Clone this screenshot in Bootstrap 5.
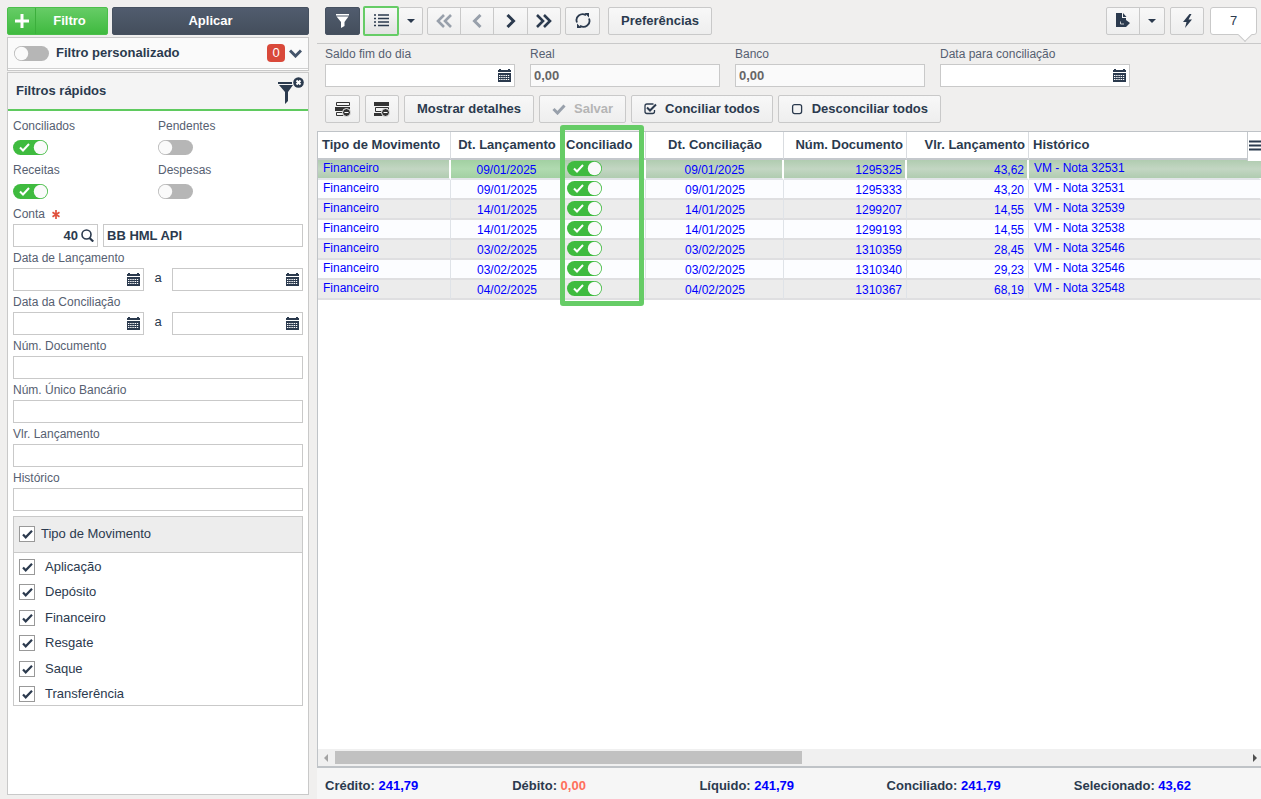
<!DOCTYPE html>
<html lang="pt-BR">
<head>
<meta charset="utf-8">
<meta name="viewport" content="width=device-width, initial-scale=1">
<title>Conciliação Bancária</title>
<link href="https://cdn.jsdelivr.net/npm/bootstrap@5.3.0/dist/css/bootstrap.min.css" rel="stylesheet">
<style>
body{background:#f0efee;color:#2b3a4e;font-family:"Liberation Sans",Arial,sans-serif;font-size:13px;line-height:20px}
svg{display:block}
.side{width:317px;padding:7px 8px 4px 7px}
.tbtn{--bs-btn-font-size:13px;--bs-btn-line-height:20px;--bs-btn-padding-x:12px;--bs-btn-padding-y:3px;--bs-btn-border-radius:2px;--bs-btn-font-weight:700;--bs-btn-color:#2b3a4e;--bs-btn-border-color:#c9c9c9;--bs-btn-hover-color:#2b3a4e;--bs-btn-hover-border-color:#aaa;--bs-btn-disabled-color:#b5b5b5;--bs-btn-disabled-border-color:#c9c9c9;--bs-btn-disabled-opacity:1;background:linear-gradient(#f8f8f8,#eee);height:28px;display:inline-flex;align-items:center;justify-content:center;white-space:nowrap}
.ico{width:35px;padding-left:0;padding-right:0}
.ico-n{width:34px;padding-left:0;padding-right:0}
.ico-c{width:26px;padding-left:0;padding-right:0}
.ico-m{width:24px;padding-left:0;padding-right:0}
.bt-green{background:linear-gradient(#66cc66,#3fba3f);color:#fff!important;border-color:#4bbf4b;width:101px;padding:0}
.bt-green .plus{width:28px;height:26px;border-right:1px solid #3caf3c}
.bt-dark{background:linear-gradient(#515c6e,#444e5c);color:#fff!important;border-color:#465160}
.picked{border:2px solid #66cc66;height:30px;width:36px;background:linear-gradient(#f8f8f8,#e2e2e2)}
.box{border:1px solid #c9c9c9}
.custom{height:34px;margin-top:2px;background:#fafafa;padding:0 6px 2px;box-shadow:inset 0 -1px #fff,inset 0 -2px #d0d0d0}
.custom label{padding-left:7px}
.count{background:#d9493a;color:#fff;font-weight:400;width:18px;height:18px;border-radius:4px;line-height:18px;text-align:center}
.panel{margin-top:1px}
.panel-head{height:38px;background:#f4f4f4;border-bottom:2px solid #5fca5f;padding:0 4px 0 8px}
.panel-body{padding:5px 5px 0}
.frow{height:44px}
.lbl{display:block;font-size:12px;line-height:20px;color:#566071}
.fld{display:flex;align-items:center;height:23px;border:1px solid #c9c9c9;background:#fff}
.fld input{border:0;outline:0;background:none;flex:1 1 0;min-width:0;padding:0 3px;font-weight:700;color:#2b3a4e;height:21px}
.fld button{border:0;background:none;padding:0 3px;color:#2b3a4e}
.fld.ro{background:#fafafa}.fld.ro input{color:#666}
.half{width:131px}
.acct{width:85px}
.sw{appearance:none;display:block;width:35px;height:15px;border-radius:8px;margin:0;flex:none;background:#b6b6b6 url("data:image/svg+xml,%3Csvg xmlns='http://www.w3.org/2000/svg' viewBox='0 0 35 15'%3E%3Ccircle cx='7.5' cy='7.5' r='6.7' fill='%23fafafa'/%3E%3C/svg%3E")}
.sw:checked{background:#3fbb3f url("data:image/svg+xml,%3Csvg xmlns='http://www.w3.org/2000/svg' viewBox='0 0 35 15'%3E%3Ccircle cx='27.5' cy='7.5' r='6.7' fill='%23fafafa'/%3E%3Cpath d='M7 7.5l3 3L16 4' fill='none' stroke='%23fff' stroke-width='2'/%3E%3C/svg%3E")}
.ck{appearance:none;display:block;width:16px;height:16px;margin:0;flex:none;border:1px solid #999;background:#fff}
.ck:checked{background:#fff url("data:image/svg+xml,%3Csvg xmlns='http://www.w3.org/2000/svg' viewBox='0 0 14 14'%3E%3Cpath d='M3 7.5l2.7 2.8L12 3.8' fill='none' stroke='%232b3a4e' stroke-width='2.2'/%3E%3C/svg%3E")}
.types-head{height:36px;background:#ededed;border-bottom:1px solid #c9c9c9;padding:0 5px 2px;gap:6px}
.types{height:152px;padding:4px 5px 1px}
.types .d-flex{gap:10px;height:20px}
.toolbar{height:44px;padding:0 4px 2px 8px;border-bottom:1px solid #c9c9c9}
.gap3{margin-right:3px}
.gap5{margin-right:5px}
.bubble{position:relative;width:47px;height:28px;margin-left:6px;background:#fff;border:1px solid #c9c9c9;border-radius:3px;line-height:26px;text-align:center}
.bubble::after{content:"";position:absolute;right:6px;bottom:-6px;width:10px;height:10px;background:#fff;border:solid #c9c9c9;border-width:0 1px 1px 0;transform:rotate(45deg)}
.heads{gap:15px;padding:0 8px}
.heads>div{flex:0 1 190px;min-width:0}
.acts{gap:5px;padding:8px}
.gridwrap{position:relative;background:#fff;border:1px solid #bfc3c7;border-right:0;border-bottom:2px solid #bfc3c7}
.gt{table-layout:fixed;width:100%;border-collapse:separate;border-spacing:0;margin:0}
.gt th{height:28px;padding:0 3px 0 4px;border-right:1px solid #d9dce0;border-bottom:2px solid #c4c8cc;white-space:nowrap;font-weight:700}
.gt th.tg{padding-left:3px}
.gt td{height:20px;padding:0 4px 1px 5px;line-height:17px;font-size:12px;color:#00f;white-space:nowrap;border-right:1px solid #dfe3e8;border-bottom:2px solid #dfdfe1;background:#fcfdff}
.gt tr:nth-child(odd) td{background:#ececec}
.gt td.lo{line-height:16px;padding-top:2px;padding-bottom:0}
.gt td.tg{padding:0 0 1px 4px}
.gt tbody tr.sel td{background:linear-gradient(#b0ccb0,#c3d6c3 50%,#b0ccb0);border-right:2px solid #fff;border-bottom:2px solid #e2e5e8}
.gt tbody tr.sel td.cur{background:linear-gradient(#a2d0a2,#b0dab0 50%,#a2d0a2)}
.gt tbody tr.sel td.text-end{padding-right:3px}
.gt tr>:last-child{border-right-color:transparent!important}
.mark-col{position:absolute;left:242px;top:-7px;width:84px;height:181px;border:5px solid #66cc66;border-radius:3px;pointer-events:none}
.colmenu{position:absolute;right:0;top:0;width:14px;height:29px;border:0;border-left:1px solid #c4c8cc;background:#fff;padding:0 0 3px 1px}
.hs{height:17px;background:#f0f0f0}
.thumb{width:calc(50% - 5px);height:13px;background:#c1c1c1}
.foot{height:31px;background:#f6f6f6;padding:6px 0 0 8px;font-weight:700;line-height:24px}
.blue{color:#00f}.coral{color:#ff6f5b}
</style>
</head>
<body>
<svg width="0" height="0" class="position-absolute" aria-hidden="true">
<symbol id="cal" viewBox="0 0 13 13"><path fill="#2b3a4e" d="M0 1h1V0h2v1h7V0h2v1h1v2H0zM0 4h13v9H0z"/><path stroke="#fff" d="M1 6.500h11M1 8.500h11M1 10.500h11" stroke-dasharray="1.400 .8"/></symbol>
<symbol id="mag" viewBox="0 0 13 13"><circle cx="5.500" cy="5.500" r="4.500" fill="none" stroke="#2b3a4e" stroke-width="1.600"/><path d="M8.500 9l3.800 3.500" stroke="#2b3a4e" stroke-width="2.200"/></symbol>
<symbol id="car" viewBox="0 0 8 4"><path fill="#2b3a4e" d="M0 0h8L4 4z"/></symbol>
</svg>
<div class="d-flex min-vh-100">
<aside class="side d-flex flex-column flex-shrink-0">
  <div class="d-flex gap-1">
    <button class="btn tbtn bt-green"><span class="plus d-flex align-items-center justify-content-center"><svg width="14" height="14"><path d="M7 0v14M0 7h14" stroke="#fff" stroke-width="3"/></svg></span><span class="flex-grow-1 pe-1">Filtro</span></button>
    <button class="btn tbtn bt-dark flex-grow-1">Aplicar</button>
  </div>
  <div class="box custom d-flex align-items-center fw-bold flex-shrink-0">
    <input type="checkbox" class="sw" id="fp"><label for="fp" class="me-auto">Filtro personalizado</label>
    <span class="count">0</span>
    <svg class="ms-1" width="13" height="9"><path d="M1 1.500l5.500 5.500 5.500-5.500" fill="none" stroke="#44546a" stroke-width="3"/></svg>
  </div>
  <section class="box panel bg-white flex-grow-1">
    <div class="panel-head d-flex align-items-center justify-content-between"><span class="fw-bold">Filtros rápidos</span>
      <svg width="27" height="32" viewBox="0 0 27 32"><path fill="#2b3a4e" d="M1 7h14v2H1zM2 10h14l-5 7v9l-3 3V17z"/><circle cx="21.500" cy="7.500" r="5.300" fill="#2b3a4e"/><path d="M19.500 5.500l4 4M23.500 5.500l-4 4" stroke="#fff" stroke-width="2"/></svg></div>
    <div class="panel-body">
      <div class="row g-0 frow"><div class="col-6"><label class="lbl" for="s1">Conciliados</label><input id="s1" type="checkbox" class="sw mt-1" checked></div><div class="col-6"><label class="lbl" for="s2">Pendentes</label><input id="s2" type="checkbox" class="sw mt-1"></div></div>
      <div class="row g-0 frow"><div class="col-6"><label class="lbl" for="s3">Receitas</label><input id="s3" type="checkbox" class="sw mt-1" checked></div><div class="col-6"><label class="lbl" for="s4">Despesas</label><input id="s4" type="checkbox" class="sw mt-1"></div></div>
      <div class="frow"><label class="lbl" for="ct">Conta&nbsp; <svg class="d-inline" width="8" height="9"><path d="M4 0v9M.5 2.200l7 4.600M7.500 2.200l-7 4.600" stroke="#e0503c" stroke-width="1.700"/></svg></label>
        <div class="d-flex"><div class="fld acct gap5"><input id="ct" class="text-end pe-0" value="40"><button aria-label="Pesquisar"><svg width="13" height="13"><use href="#mag"/></svg></button></div><div class="fld flex-grow-1"><input value="BB HML API" aria-label="Nome da conta"></div></div></div>
      <div class="frow"><label class="lbl" for="d1">Data de Lançamento</label><div class="d-flex justify-content-between"><div class="fld half"><input id="d1"><button aria-label="Calendário"><svg width="13" height="13"><use href="#cal"/></svg></button></div><span>a</span><div class="fld half"><input aria-label="até"><button aria-label="Calendário"><svg width="13" height="13"><use href="#cal"/></svg></button></div></div></div>
      <div class="frow"><label class="lbl" for="d2">Data da Conciliação</label><div class="d-flex justify-content-between"><div class="fld half"><input id="d2"><button aria-label="Calendário"><svg width="13" height="13"><use href="#cal"/></svg></button></div><span>a</span><div class="fld half"><input aria-label="até"><button aria-label="Calendário"><svg width="13" height="13"><use href="#cal"/></svg></button></div></div></div>
      <div class="frow"><label class="lbl" for="t1">Núm. Documento</label><div class="fld"><input id="t1"></div></div>
      <div class="frow"><label class="lbl" for="t2">Núm. Único Bancário</label><div class="fld"><input id="t2"></div></div>
      <div class="frow"><label class="lbl" for="t3">Vlr. Lançamento</label><div class="fld"><input id="t3"></div></div>
      <div class="frow"><label class="lbl" for="t4">Histórico</label><div class="fld"><input id="t4"></div></div>
      <div class="box mt-1">
        <div class="types-head d-flex align-items-center"><input type="checkbox" class="ck" id="k0" checked><label for="k0">Tipo de Movimento</label></div>
        <div class="types d-flex flex-column justify-content-between">
          <div class="d-flex align-items-center"><input type="checkbox" class="ck" id="k1" checked><label for="k1">Aplicação</label></div>
          <div class="d-flex align-items-center"><input type="checkbox" class="ck" id="k2" checked><label for="k2">Depósito</label></div>
          <div class="d-flex align-items-center"><input type="checkbox" class="ck" id="k3" checked><label for="k3">Financeiro</label></div>
          <div class="d-flex align-items-center"><input type="checkbox" class="ck" id="k4" checked><label for="k4">Resgate</label></div>
          <div class="d-flex align-items-center"><input type="checkbox" class="ck" id="k5" checked><label for="k5">Saque</label></div>
          <div class="d-flex align-items-center"><input type="checkbox" class="ck" id="k6" checked><label for="k6">Transferência</label></div>
        </div>
      </div>
    </div>
  </section>
</aside>
<main class="d-flex flex-column flex-grow-1" style="min-width:0">
  <div class="toolbar d-flex align-items-center">
    <button class="btn tbtn bt-dark ico gap3" aria-label="Filtrar"><svg width="13" height="14"><path fill="#fff" d="M0 0h13v1.500H0zM.5 2.500h12L8.500 8v4L5 14V8z"/></svg></button>
    <button class="btn tbtn picked px-0" aria-label="Lista"><svg width="15" height="13"><path d="M0 1h2M0 4.500h2M0 8h2M0 11.500h2M4 1h11M4 4.500h11M4 8h11M4 11.500h11" stroke="#2b3a4e" stroke-width="1.500"/></svg></button>
    <button class="btn tbtn ico-m border-start-0 me-1" aria-label="Modos"><svg width="8" height="4"><use href="#car"/></svg></button>
    <div class="btn-group">
      <button class="btn tbtn ico-n" aria-label="Primeiro"><svg width="16" height="14"><path d="M8 1L2 7l6 6M15 1L9 7l6 6" fill="none" stroke="#98a0ab" stroke-width="2.600"/></svg></button>
      <button class="btn tbtn ico-n" aria-label="Anterior"><svg width="10" height="14"><path d="M8.500 1l-6 6 6 6" fill="none" stroke="#98a0ab" stroke-width="3"/></svg></button>
      <button class="btn tbtn ico" aria-label="Próximo"><svg width="10" height="14"><path d="M1.500 1l6 6-6 6" fill="none" stroke="#2b3a4e" stroke-width="3"/></svg></button>
      <button class="btn tbtn ico-n" aria-label="Último"><svg width="16" height="14"><path d="M1 1l6 6-6 6M8 1l6 6-6 6" fill="none" stroke="#2b3a4e" stroke-width="2.600"/></svg></button>
    </div>
    <button class="btn tbtn ico ms-1" aria-label="Atualizar"><svg width="16" height="15" viewBox="0 0 16 15"><path d="M2 9.500A6 6 0 0 1 11 2.300M14 5.500A6 6 0 0 1 5 12.700" fill="none" stroke="#2b3a4e" stroke-width="1.800"/><path fill="#2b3a4e" d="M9.500 0H14v4.500zM6.500 15H2v-4.500z"/></svg></button>
    <button class="btn tbtn ms-2">Preferências</button>
    <div class="btn-group ms-auto gap5"><button class="btn tbtn ico-n" aria-label="Exportar"><svg width="14" height="15" viewBox="0 0 14 15"><path fill="#2b3a4e" d="M0 0h6v5h4v2l4 3-4 4H0zM7 0l3.500 4H7z"/><path stroke="#eee" d="M4.500 8.500v2.500H8" fill="none" stroke-width=".8"/></svg></button><button class="btn tbtn ico-c" aria-label="Opções"><svg width="8" height="4"><use href="#car"/></svg></button></div>
    <button class="btn tbtn ico-n" aria-label="Ações"><svg width="9" height="14"><path fill="#2b3a4e" d="M6.500 0L0 8h3.500L2 14l7-8.500H5.500L8.500 0z"/></svg></button>
    <div class="bubble">7</div>
  </div>
  <div class="heads d-flex">
    <div><label class="lbl" for="h1">Saldo fim do dia</label><div class="fld"><input id="h1"><button aria-label="Calendário"><svg width="13" height="13"><use href="#cal"/></svg></button></div></div>
    <div><label class="lbl" for="h2">Real</label><div class="fld ro"><input id="h2" value="0,00" readonly></div></div>
    <div><label class="lbl" for="h3">Banco</label><div class="fld ro"><input id="h3" value="0,00" readonly></div></div>
    <div><label class="lbl" for="h4">Data para conciliação</label><div class="fld"><input id="h4"><button aria-label="Calendário"><svg width="13" height="13"><use href="#cal"/></svg></button></div></div>
  </div>
  <div class="acts d-flex">
    <button class="btn tbtn ico" aria-label="Recolher cabeçalho"><svg width="16" height="16" viewBox="0 0 16 16"><path d="M1.500 1.500h13v3h-13z" fill="none" stroke="#333"/><path fill="#333" d="M0 6h15v4H0z"/><path d="M1.500 11.500h8v3h-8z" fill="none" stroke="#333"/><circle cx="11.500" cy="11.500" r="4" fill="#333" stroke="#eee"/><path d="M9.500 11.500h4" stroke="#fff"/></svg></button>
    <button class="btn tbtn ico-n" aria-label="Recolher rodapé"><svg width="16" height="16" viewBox="0 0 16 16"><path fill="#333" d="M0 1h15v4H0zM0 12h10v3H0z"/><path d="M1.500 6.500h13v4h-13z" fill="none" stroke="#333"/><circle cx="11.500" cy="11.500" r="4" fill="#333" stroke="#eee"/><path d="M9.500 11.500h4" stroke="#fff"/></svg></button>
    <button class="btn tbtn">Mostrar detalhes</button>
    <button class="btn tbtn" disabled><svg class="me-2" width="14" height="11"><path d="M1.500 5l4 4 7-7.500" fill="none" stroke="#98a0ab" stroke-width="3"/></svg>Salvar</button>
    <button class="btn tbtn"><svg class="me-2" width="13" height="12"><path d="M9.500 1H3a2 2 0 0 0-2 2v5.500a2 2 0 0 0 2 2h5.500a2 2 0 0 0 2-2V7" fill="none" stroke="#2b3a4e" stroke-width="1.300"/><path d="M3 4.500l3 3 6-6" fill="none" stroke="#2b3a4e" stroke-width="2"/></svg>Conciliar todos</button>
    <button class="btn tbtn"><svg class="me-2" width="13" height="12"><rect x="1.600" y="1.600" width="9" height="9" rx="2" fill="none" stroke="#2b3a4e" stroke-width="1.300"/></svg>Desconciliar todos</button>
  </div>
  <div class="gridwrap d-flex flex-column flex-grow-1">
    <table class="gt">
      <colgroup><col style="width:133px"><col style="width:112px"><col style="width:83px"><col style="width:138px"><col style="width:123px"><col style="width:122px"><col></colgroup>
      <thead><tr><th>Tipo de Movimento</th><th class="text-center">Dt. Lançamento</th><th class="tg">Conciliado</th><th class="text-center">Dt. Conciliação</th><th class="text-end">Núm. Documento</th><th class="text-end">Vlr. Lançamento</th><th>Histórico</th></tr></thead>
      <tbody id="rows"></tbody>
    </table>
    <div class="mark-col"></div>
    <button class="colmenu" aria-label="Colunas"><svg width="12" height="11"><path d="M0 1.500h12M0 5.500h12M0 9.500h12" stroke="#2b3a4e" stroke-width="2"/></svg></button>
    <div class="hs mt-auto d-flex align-items-center"><svg width="17" height="8"><path fill="#a3a3a3" d="M10 0v8L6 4z"/></svg><div class="thumb"></div><svg class="ms-auto me-1" width="4" height="8"><path fill="#505050" d="M0 0l4 4-4 4z"/></svg></div>
  </div>
  <div class="foot row g-0">
    <div class="col">Crédito: <span class="blue">241,79</span></div><div class="col">Débito: <span class="coral">0,00</span></div><div class="col">Líquido: <span class="blue">241,79</span></div><div class="col">Conciliado: <span class="blue">241,79</span></div><div class="col">Selecionado: <span class="blue">43,62</span></div>
  </div>
</main>
</div>
<script>
const data=[["09/01/2025","1295325","43,62","32531"],["09/01/2025","1295333","43,20","32531"],["14/01/2025","1299207","14,55","32539"],["14/01/2025","1299193","14,55","32538"],["03/02/2025","1310359","28,45","32546"],["03/02/2025","1310340","29,23","32546"],["04/02/2025","1310367","68,19","32548"]];
document.getElementById("rows").innerHTML=data.map((r,i)=>`<tr class="${i?"":"sel"}"><td>Financeiro</td><td class="text-center lo cur">${r[0]}</td><td class="tg"><input type="checkbox" class="sw" checked aria-label="Conciliado"></td><td class="text-center lo">${r[0]}</td><td class="text-end lo">${r[1]}</td><td class="text-end lo">${r[2]}</td><td>VM - Nota ${r[3]}</td></tr>`).join("");
</script>
<script src="https://cdn.jsdelivr.net/npm/bootstrap@5.3.0/dist/js/bootstrap.bundle.min.js"></script>
</body>
</html>
